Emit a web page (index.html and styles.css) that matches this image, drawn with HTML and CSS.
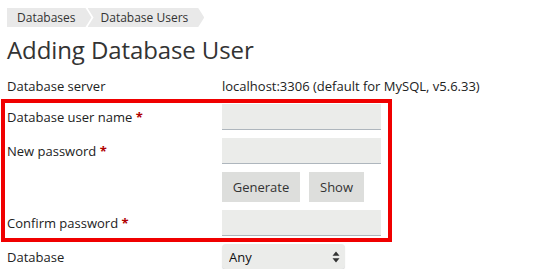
FILE: index.html
```html
<!DOCTYPE html>
<html>
<head>
<meta charset="utf-8">
<link rel="stylesheet" href="styles.css">
</head>
<body>
<div class="page">
  <nav class="crumbs">
    <span class="crumb first">Databases</span>
    <span class="crumb">Database Users</span>
  </nav>
  <h1 class="title">Adding Database User</h1>
  <div class="row info">
    <div class="label">Database server</div>
    <div class="value">localhost:3306 (default for MySQL, v5.6.33)</div>
  </div>
  <div class="highlight">
    <div class="row">
      <label class="label">Database user name <span class="req">*</span></label>
      <div class="field"><input class="input" type="text"></div>
    </div>
    <div class="row">
      <label class="label">New password <span class="req">*</span></label>
      <div class="field"><input class="input" type="password"></div>
    </div>
    <div class="row">
      <div class="label"></div>
      <div class="field buttons">
        <button class="btn gen">Generate</button>
        <button class="btn show">Show</button>
      </div>
    </div>
    <div class="row">
      <label class="label">Confirm password <span class="req">*</span></label>
      <div class="field"><input class="input" type="password"></div>
    </div>
  </div>
  <div class="row dbrow">
    <label class="label">Database</label>
    <div class="field">
      <div class="select-wrap">
        <select class="select"><option>Any</option></select>
        <svg class="arrows" width="8" height="12" viewBox="0 0 8 12"><path d="M4 0.5 L7.5 4.8 H0.5 Z M4 11.5 L7.5 7.2 H0.5 Z" fill="#333"/></svg>
      </div>
    </div>
  </div>
</div>
</body>
</html>
```
FILE: styles.css
```css
* { box-sizing: border-box; }
html, body { margin: 0; padding: 0; background: #fff; }
body {
  font-family: "Open Sans", "DejaVu Sans", sans-serif;
  font-size: 13px;
  color: #222;
}
.page { padding: 8px 0 0 7px; width: 550px; }
.crumbs { display: flex; height: 19px; }
.crumb {
  display: flex;
  align-items: center;
  background: #e9e9e9;
  color: #333;
  font-size: 12px;
  line-height: 19px;
  padding: 0 16px 0 13px;
  margin-left: -4px;
  clip-path: polygon(0 0, calc(100% - 6px) 0, 100% 50%, calc(100% - 6px) 100%, 0 100%, 6px 50%);
}
.crumb.first {
  margin-left: 0;
  padding-left: 10px;
  clip-path: polygon(0 0, calc(100% - 6px) 0, 100% 50%, calc(100% - 6px) 100%, 0 100%);
}
.title {
  margin: 3px 0 0 0;
  font-size: 24px;
  font-weight: 400;
  line-height: 40px;
  color: #333;
  letter-spacing: -0.1px;
}
.row {
  display: grid;
  grid-template-columns: 215px 159px;
  align-items: center;
}
.info { grid-template-columns: 215px auto; height: 20px; margin-top: 6px; }
.value { white-space: nowrap; }
.label { color: #222; }
.req { color: #b00000; font-weight: 700; }
.highlight {
  margin: 3px 0 0 -6px;
  width: 391px;
  border: 4px solid #f00000;
  padding: 1px 0 2px 2px;
  display: flex;
  flex-direction: column;
  gap: 8px;
}
.field { display: flex; }
.input {
  width: 159px;
  height: 26px;
  border: none;
  border-bottom: 1px solid #aeb6bd;
  background: #ebecea;
  margin: 0;
  padding: 0 6px;
  font: inherit;
}
.buttons { gap: 9px; }
.btn {
  height: 30px;
  border: none;
  background: #dddedc;
  color: #333;
  font: inherit;
  font-size: 13px;
  padding: 0;
  margin: 0;
}
.gen { width: 78px; }
.show { width: 55px; }
.dbrow { margin-top: 2px; }
.select-wrap { position: relative; width: 123px; height: 25px; }
.select {
  appearance: none;
  -webkit-appearance: none;
  width: 123px;
  height: 25px;
  border: none;
  border-radius: 4px;
  background: #ebecea;
  box-shadow: 0 1px 1px rgba(0,0,0,0.15);
  font: inherit;
  color: #111;
  padding: 0 0 0 7px;
  margin: 0;
}
.arrows { position: absolute; right: 5px; top: 7px; pointer-events: none; }
```
